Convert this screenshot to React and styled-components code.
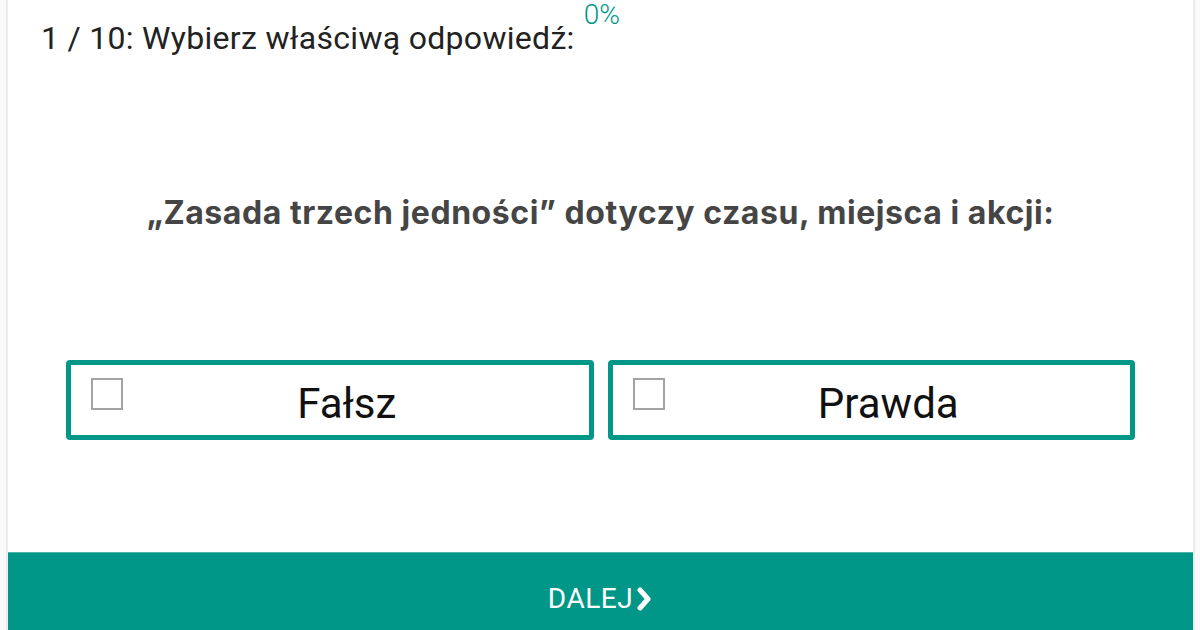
import React from "react";
import styled, { createGlobalStyle } from "styled-components";

const TEAL = "#009688";

const GlobalStyle = createGlobalStyle`
  html, body {
    margin: 0;
    padding: 0;
    background: #fafafa;
  }
  * {
    box-sizing: border-box;
  }
`;

const options = ["Fałsz", "Prawda"];

const App = () => {
  return (
    <>
      <GlobalStyle />
      <Card>
        <Header>
          <Title>1 / 10: Wybierz właściwą odpowiedź:</Title>
          <Percent>0%</Percent>
        </Header>
        <Question>
          „Zasada trzech jedności” dotyczy czasu, miejsca i akcji:
        </Question>
        <Options>
          {options.map((label) => (
            <Option key={label}>
              <Checkbox />
              <OptionLabel>{label}</OptionLabel>
            </Option>
          ))}
        </Options>
        <Footer>
          <NextButton>
            DALEJ
            <svg width="18" height="24" viewBox="0 0 18 24">
              <polyline
                points="5,3 13,12 5,21"
                fill="none"
                stroke="#fff"
                strokeWidth="5"
                strokeLinecap="round"
                strokeLinejoin="round"
              />
            </svg>
          </NextButton>
        </Footer>
      </Card>
    </>
  );
};

export default App;

const Card = styled.div`
  display: flex;
  flex-direction: column;
  height: 630px;
  margin: 0 5px 0 6px;
  background: #fff;
  border-left: 2px solid #ececec;
  border-right: 2px solid #ececec;
  overflow: hidden;
`;

const Header = styled.div`
  display: flex;
  align-items: flex-start;
  height: 70px;
  padding-left: 33px;
  font-family: Roboto, "Liberation Sans", sans-serif;
`;

const Title = styled.div`
  margin-top: 19px;
  font-size: 32px;
  letter-spacing: 0.3px;
  line-height: 38px;
  color: #222;
  white-space: nowrap;
`;

const Percent = styled.div`
  margin: 0 0 0 9px;
  font-size: 28px;
  font-weight: 300;
  line-height: 30px;
  color: ${TEAL};
`;

const Question = styled.div`
  margin-top: 124px;
  text-align: center;
  font-family: Inter, "Liberation Sans", sans-serif;
  font-weight: 700;
  font-size: 32px;
  letter-spacing: 0.55px;
  line-height: 38px;
  color: #454545;
  white-space: nowrap;
`;

const Options = styled.div`
  display: flex;
  gap: 14px;
  margin-top: 128px;
  padding: 0 58px;
`;

const Option = styled.div`
  flex: 1;
  display: flex;
  align-items: flex-start;
  height: 80px;
  padding: 13px 18px 0 20px;
  border: 5px solid ${TEAL};
  border-radius: 4px;
  background: #fff;
`;

const Checkbox = styled.div`
  flex-shrink: 0;
  width: 32px;
  height: 32px;
  border: 2px solid #a3a3a3;
`;

const OptionLabel = styled.div`
  flex: 1;
  margin-top: 2px;
  text-align: center;
  font-family: Roboto, "Liberation Sans", sans-serif;
  font-size: 42px;
  line-height: 48px;
  color: #111;
`;

const Footer = styled.div`
  display: flex;
  align-items: center;
  justify-content: center;
  height: 78px;
  margin-top: auto;
  padding-top: 14px;
  background: ${TEAL};
  border-top: 1px solid #4db6ac;
`;

const NextButton = styled.div`
  display: flex;
  align-items: center;
  gap: 2px;
  font-family: Roboto, "Liberation Sans", sans-serif;
  font-size: 28px;
  letter-spacing: 0.5px;
  color: #fff;
`;
